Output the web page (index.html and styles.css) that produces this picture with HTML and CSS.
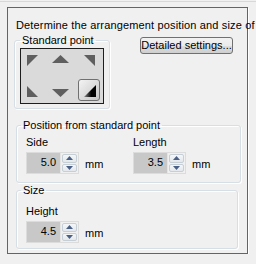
FILE: index.html
```html
<!DOCTYPE html>
<html lang="en">
<head>
    <meta charset="UTF-8">
    <title>Arrangement</title>
    <link rel="stylesheet" href="styles.css">
</head>
<body>
    <div class="topline"></div>
    <div class="panel">
        <p class="intro">Determine the arrangement position and size of</p>

        <div class="top-row">
            <fieldset class="group point-group">
                <legend>Standard point</legend>
                <div class="point-grid">
                    <div class="cell"><svg width="22" height="22"><polygon points="5,6 16,6 5,17" fill="#5f5f5f"/></svg></div>
                    <div class="cell"><svg width="22" height="22"><polygon points="10.5,6 19,14 2,14" fill="#5f5f5f"/></svg></div>
                    <div class="cell"><svg width="22" height="22"><polygon points="6,6 17,6 17,17" fill="#5f5f5f"/></svg></div>
                    <div class="cell"><svg width="22" height="22"><polygon points="5,7 5,18 16,18" fill="#5f5f5f"/></svg></div>
                    <div class="cell"><svg width="22" height="22"><polygon points="2,10 19,10 10.5,18" fill="#5f5f5f"/></svg></div>
                    <div class="cell selected">
                        <svg width="20" height="20">
                            <defs>
                                <linearGradient id="tri" x1="0" y1="0" x2="1" y2="0">
                                    <stop offset="0" stop-color="#8a8a8a"/>
                                    <stop offset="0.6" stop-color="#000"/>
                                </linearGradient>
                            </defs>
                            <polygon points="17,5 17,17 5,17" fill="url(#tri)"/>
                        </svg>
                    </div>
                </div>
            </fieldset>
            <button class="btn">Detailed settings...</button>
        </div>

        <fieldset class="group pos-group">
            <legend>Position from standard point</legend>
            <div class="field-row">
                <div class="field">
                    <div class="field-label">Side</div>
                    <div class="spin-row">
                        <div class="spin">
                            <div class="spin-value">5.0</div>
                            <div class="spin-btns">
                                <div class="spin-btn"><svg width="7" height="4"><polygon points="3.5,0 7,4 0,4" fill="#4a5f86"/></svg></div>
                                <div class="spin-btn"><svg width="7" height="4"><polygon points="0,0 7,0 3.5,4" fill="#4a5f86"/></svg></div>
                            </div>
                        </div>
                        <span class="unit">mm</span>
                    </div>
                </div>
                <div class="field">
                    <div class="field-label">Length</div>
                    <div class="spin-row">
                        <div class="spin">
                            <div class="spin-value">3.5</div>
                            <div class="spin-btns">
                                <div class="spin-btn"><svg width="7" height="4"><polygon points="3.5,0 7,4 0,4" fill="#4a5f86"/></svg></div>
                                <div class="spin-btn"><svg width="7" height="4"><polygon points="0,0 7,0 3.5,4" fill="#4a5f86"/></svg></div>
                            </div>
                        </div>
                        <span class="unit">mm</span>
                    </div>
                </div>
            </div>
        </fieldset>

        <fieldset class="group size-group">
            <legend>Size</legend>
            <div class="field">
                <div class="field-label">Height</div>
                <div class="spin-row">
                    <div class="spin">
                        <div class="spin-value">4.5</div>
                        <div class="spin-btns">
                            <div class="spin-btn"><svg width="7" height="4"><polygon points="3.5,0 7,4 0,4" fill="#4a5f86"/></svg></div>
                            <div class="spin-btn"><svg width="7" height="4"><polygon points="0,0 7,0 3.5,4" fill="#4a5f86"/></svg></div>
                        </div>
                    </div>
                    <span class="unit">mm</span>
                </div>
            </div>
        </fieldset>
    </div>
</body>
</html>
```

FILE: styles.css
```css
body {
    margin: 0;
    background: #f0f0f0;
    font-family: "Liberation Sans", Arial, sans-serif;
    font-size: 11px;
    line-height: 13px;
    color: #000;
}
.topline {
    height: 1px;
    border-bottom: 1px solid #d8d8d8;
}
.panel {
    margin: 5px 8px 0 7px;
    height: 245px;
    border: 1px solid #646464;
    box-shadow: 1px 1px 0 #fff;
}
.intro {
    margin: 11px 0 0 8px;
    white-space: nowrap;
    letter-spacing: 0.15px;
}
.top-row {
    display: flex;
    align-items: flex-start;
    margin-top: 2px;
}
.group {
    margin: 0;
    border: 1px solid #d5dfe5;
    border-radius: 3px;
    box-shadow: inset 1px 1px 0 #fff, 1px 1px 0 #fff;
}
.group legend {
    padding: 0 2px;
    margin-left: -5px;
}
.point-group {
    margin-left: 6px;
    width: 96px;
    box-sizing: border-box;
    padding: 1px 0 4px 5px;
}
.point-group legend {
    margin-left: 0;
}
.point-grid {
    width: 81px;
    height: 54px;
    border: 1px solid #1e1e1e;
    background: #dadada;
    display: grid;
    grid-template-columns: 22px 22px 22px;
    grid-template-rows: 22px 22px;
    column-gap: 6px;
    row-gap: 8px;
    padding-left: 1px;
    box-sizing: content-box;
}
.cell svg {
    display: block;
}
.cell.selected {
    border: 1px solid #707070;
    border-radius: 3px;
    background: linear-gradient(135deg, #f4f4f4 0%, #dcdcdc 50%, #c4c4c4 100%);
}
.btn {
    margin: 3px 0 0 30px;
    height: 17px;
    width: 93px;
    padding: 0;
    font: inherit;
    color: #000;
    border: 1px solid #707070;
    border-radius: 3px;
    background: linear-gradient(#f2f2f2, #ebebeb 50%, #dddddd 51%, #cfcfcf);
}
.pos-group {
    margin: 10px 9px 0 8px;
    padding: 4px 0 8px 9px;
}
.size-group {
    margin: 1px 9px 0 8px;
    padding: 8px 0 5px 9px;
}
.field-row {
    display: flex;
}
.field-row .field {
    width: 107px;
}
.field-label {
    margin-bottom: 3px;
}
.spin-row {
    display: flex;
    align-items: center;
}
.spin {
    display: flex;
    height: 22px;
    width: 53px;
    box-sizing: border-box;
    border: 1px solid #dcdcdc;
}
.spin-value {
    width: 34px;
    background: #c8c8c8;
    text-align: right;
    padding-right: 4px;
    box-sizing: border-box;
    line-height: 19px;
    border-right: 1px solid #e4e4e4;
}
.spin-btns {
    flex: 1;
    display: flex;
    flex-direction: column;
    gap: 1px;
    padding: 1px;
}
.spin-btn {
    flex: 1;
    display: flex;
    align-items: center;
    justify-content: center;
    border: 1px solid #c6ced6;
    border-radius: 2px;
    background: linear-gradient(#f4f6f8, #e4e8ec);
}
.spin-btn svg {
    display: block;
}
.unit {
    margin-left: 6px;
    margin-top: 3px;
}
```
